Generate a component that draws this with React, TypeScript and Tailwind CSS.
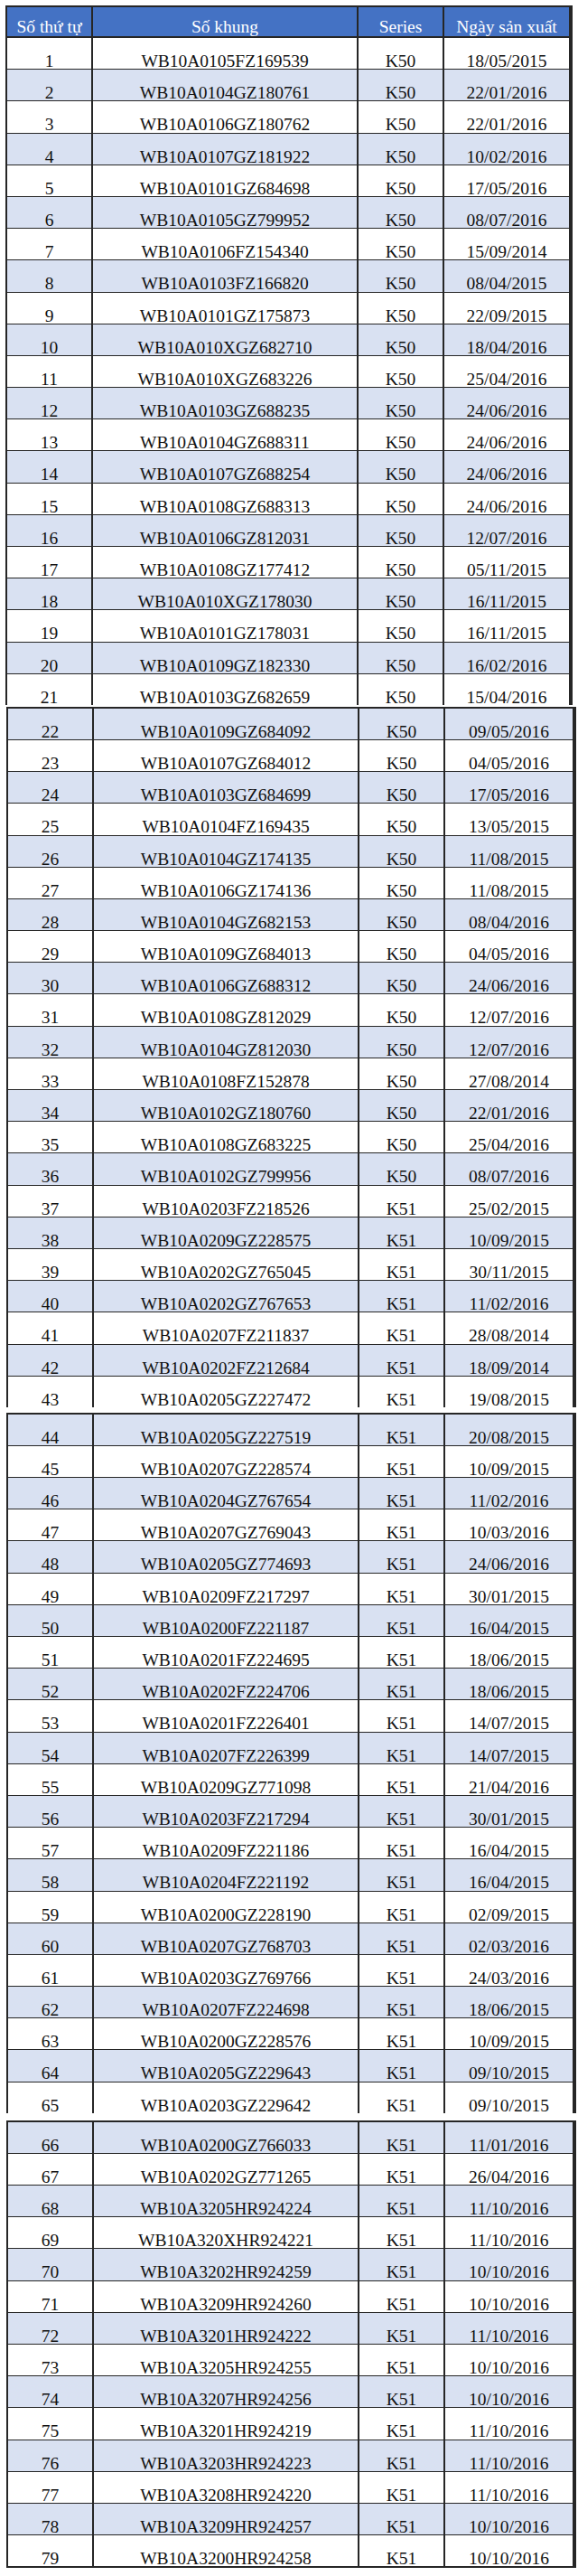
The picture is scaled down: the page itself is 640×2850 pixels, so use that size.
const rows: [string, string, string][] = [
  ["WB10A0105FZ169539", "K50", "18/05/2015"],
  ["WB10A0104GZ180761", "K50", "22/01/2016"],
  ["WB10A0106GZ180762", "K50", "22/01/2016"],
  ["WB10A0107GZ181922", "K50", "10/02/2016"],
  ["WB10A0101GZ684698", "K50", "17/05/2016"],
  ["WB10A0105GZ799952", "K50", "08/07/2016"],
  ["WB10A0106FZ154340", "K50", "15/09/2014"],
  ["WB10A0103FZ166820", "K50", "08/04/2015"],
  ["WB10A0101GZ175873", "K50", "22/09/2015"],
  ["WB10A010XGZ682710", "K50", "18/04/2016"],
  ["WB10A010XGZ683226", "K50", "25/04/2016"],
  ["WB10A0103GZ688235", "K50", "24/06/2016"],
  ["WB10A0104GZ688311", "K50", "24/06/2016"],
  ["WB10A0107GZ688254", "K50", "24/06/2016"],
  ["WB10A0108GZ688313", "K50", "24/06/2016"],
  ["WB10A0106GZ812031", "K50", "12/07/2016"],
  ["WB10A0108GZ177412", "K50", "05/11/2015"],
  ["WB10A010XGZ178030", "K50", "16/11/2015"],
  ["WB10A0101GZ178031", "K50", "16/11/2015"],
  ["WB10A0109GZ182330", "K50", "16/02/2016"],
  ["WB10A0103GZ682659", "K50", "15/04/2016"],
  ["WB10A0109GZ684092", "K50", "09/05/2016"],
  ["WB10A0107GZ684012", "K50", "04/05/2016"],
  ["WB10A0103GZ684699", "K50", "17/05/2016"],
  ["WB10A0104FZ169435", "K50", "13/05/2015"],
  ["WB10A0104GZ174135", "K50", "11/08/2015"],
  ["WB10A0106GZ174136", "K50", "11/08/2015"],
  ["WB10A0104GZ682153", "K50", "08/04/2016"],
  ["WB10A0109GZ684013", "K50", "04/05/2016"],
  ["WB10A0106GZ688312", "K50", "24/06/2016"],
  ["WB10A0108GZ812029", "K50", "12/07/2016"],
  ["WB10A0104GZ812030", "K50", "12/07/2016"],
  ["WB10A0108FZ152878", "K50", "27/08/2014"],
  ["WB10A0102GZ180760", "K50", "22/01/2016"],
  ["WB10A0108GZ683225", "K50", "25/04/2016"],
  ["WB10A0102GZ799956", "K50", "08/07/2016"],
  ["WB10A0203FZ218526", "K51", "25/02/2015"],
  ["WB10A0209GZ228575", "K51", "10/09/2015"],
  ["WB10A0202GZ765045", "K51", "30/11/2015"],
  ["WB10A0202GZ767653", "K51", "11/02/2016"],
  ["WB10A0207FZ211837", "K51", "28/08/2014"],
  ["WB10A0202FZ212684", "K51", "18/09/2014"],
  ["WB10A0205GZ227472", "K51", "19/08/2015"],
  ["WB10A0205GZ227519", "K51", "20/08/2015"],
  ["WB10A0207GZ228574", "K51", "10/09/2015"],
  ["WB10A0204GZ767654", "K51", "11/02/2016"],
  ["WB10A0207GZ769043", "K51", "10/03/2016"],
  ["WB10A0205GZ774693", "K51", "24/06/2016"],
  ["WB10A0209FZ217297", "K51", "30/01/2015"],
  ["WB10A0200FZ221187", "K51", "16/04/2015"],
  ["WB10A0201FZ224695", "K51", "18/06/2015"],
  ["WB10A0202FZ224706", "K51", "18/06/2015"],
  ["WB10A0201FZ226401", "K51", "14/07/2015"],
  ["WB10A0207FZ226399", "K51", "14/07/2015"],
  ["WB10A0209GZ771098", "K51", "21/04/2016"],
  ["WB10A0203FZ217294", "K51", "30/01/2015"],
  ["WB10A0209FZ221186", "K51", "16/04/2015"],
  ["WB10A0204FZ221192", "K51", "16/04/2015"],
  ["WB10A0200GZ228190", "K51", "02/09/2015"],
  ["WB10A0207GZ768703", "K51", "02/03/2016"],
  ["WB10A0203GZ769766", "K51", "24/03/2016"],
  ["WB10A0207FZ224698", "K51", "18/06/2015"],
  ["WB10A0200GZ228576", "K51", "10/09/2015"],
  ["WB10A0205GZ229643", "K51", "09/10/2015"],
  ["WB10A0203GZ229642", "K51", "09/10/2015"],
  ["WB10A0200GZ766033", "K51", "11/01/2016"],
  ["WB10A0202GZ771265", "K51", "26/04/2016"],
  ["WB10A3205HR924224", "K51", "11/10/2016"],
  ["WB10A320XHR924221", "K51", "11/10/2016"],
  ["WB10A3202HR924259", "K51", "10/10/2016"],
  ["WB10A3209HR924260", "K51", "10/10/2016"],
  ["WB10A3201HR924222", "K51", "11/10/2016"],
  ["WB10A3205HR924255", "K51", "10/10/2016"],
  ["WB10A3207HR924256", "K51", "10/10/2016"],
  ["WB10A3201HR924219", "K51", "11/10/2016"],
  ["WB10A3203HR924223", "K51", "11/10/2016"],
  ["WB10A3208HR924220", "K51", "11/10/2016"],
  ["WB10A3209HR924257", "K51", "10/10/2016"],
  ["WB10A3200HR924258", "K51", "10/10/2016"],
];

// the screenshot is stitched from 4 captures, each one ends on a shortened row
const parts = [
  { from: 1, to: 21, cls: "mt-[6px] ml-[6px] w-[628px]" },
  { from: 22, to: 43, cls: "mt-[2px] ml-[7px] w-[631px]" },
  { from: 44, to: 65, cls: "mt-[6px] ml-[7px] w-[631px]" },
  { from: 66, to: 79, cls: "mt-[8px] ml-[7px] w-[631px] border-b-2" },
];

const grid = "grid grid-cols-[95px_294px_95px_1fr]";
const cell = "flex justify-center leading-[17px] whitespace-nowrap border-r-2 border-[#262626]";

function Row({ n, isLast }: { n: number; isLast: boolean }) {
  const [frame, series, date] = rows[n - 1];
  const bg = n % 2 === 0 ? "bg-[#d9e1f2]" : "bg-white";
  const size = isLast ? "h-[34px]" : "h-[35.2px] border-b border-[#262626]";
  return (
    <div className={`${grid} ${bg} ${size}`}>
      {[String(n), frame, series, date].map((t, i) => (
        <div key={i} className={`${cell} ${i === 3 ? "border-r-0" : ""} pt-[17px]`}>
          {t}
        </div>
      ))}
    </div>
  );
}

export default function App() {
  return (
    <div className="w-[640px] min-h-[2850px] bg-white flow-root text-[19.5px] text-[#111] font-['Liberation_Serif','Times_New_Roman',serif]">
      {parts.map((p, pi) => (
        <div key={pi} className={`${p.cls} border-x-2 border-t-2 border-[#262626]`}>
          {pi === 0 && (
            <div className={`${grid} h-[34px] bg-[#4472c4] text-white border-b-2 border-[#262626]`}>
              {["Số thứ tự", "Số khung", "Series", "Ngày sản xuất"].map((h, i) => (
                <div key={h} className={`${cell} ${i === 3 ? "border-r-0" : ""} pt-[13px]`}>
                  {h}
                </div>
              ))}
            </div>
          )}
          {Array.from({ length: p.to - p.from + 1 }, (_, k) => {
            const n = p.from + k;
            return <Row key={n} n={n} isLast={n === p.to} />;
          })}
        </div>
      ))}
    </div>
  );
}
